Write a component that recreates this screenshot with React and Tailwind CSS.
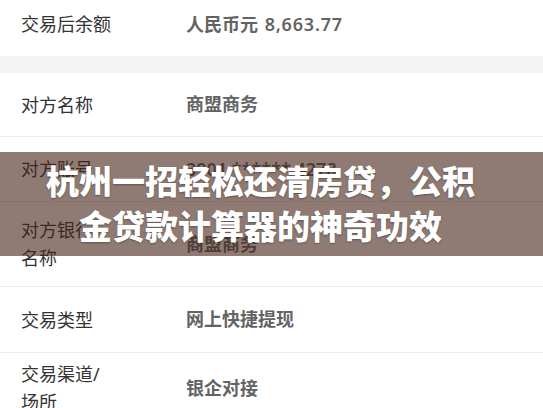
import React from 'react';

const rows = [
  { label: ['对方名称'], value: '商盟商务', h: 'h-[64px]' },
  { label: ['对方账号'], value: '3901 ****** 4278', h: 'h-[65px]' },
  { label: ['对方银行', '名称'], value: '商盟商务', h: 'h-[85px]' },
  { label: ['交易类型'], value: '网上快捷提现', h: 'h-[66px]' },
  { label: ['交易渠道/', '场所'], value: '银企对接', h: 'h-[70px]' },
];

const Row = ({ label, value, h, last }) => (
  <div className={`flex items-center ${h} ${last ? '' : 'border-b border-[#ececec]'}`}>
    <div className="w-[186px] shrink-0 pl-[21px] text-[18px] leading-[28px] text-[#333333]">
      {label.map((l) => (
        <div key={l}>{l}</div>
      ))}
    </div>
    <div className="text-[18px] font-semibold text-[#636363]">{value}</div>
  </div>
);

export default function App() {
  return (
    <div
      className="relative h-[408px] w-[543px] overflow-hidden bg-white"
      style={{ fontFamily: '"Noto Sans", "Noto Sans CJK SC", sans-serif' }}
    >
      <div className="flex h-[56px] items-start pt-[10px]">
        <div className="w-[186px] shrink-0 pl-[21px] text-[18px] leading-[28px] text-[#333333]">交易后余额</div>
        <div className="text-[18px] font-semibold leading-[28px] text-[#636363]">
          人民币元 <span className="ml-[2px] tracking-[0.8px]">8,663.77</span>
        </div>
      </div>
      <div className="h-[17px] bg-[#f4f2f5]" />
      {rows.map((r, i) => (
        <Row key={i} {...r} last={i === rows.length - 1} />
      ))}

      <div className="absolute left-0 right-0 top-[152px] flex h-[104px] flex-col items-center justify-center bg-[rgba(68,35,23,0.6)] pr-[22px]">
        <div className="text-center text-[33px] font-black leading-[45px] text-white [text-shadow:0_1px_2px_rgba(0,0,0,0.35)]">
          杭州一招轻松还清房贷，公积
        </div>
        <div className="text-center text-[33px] font-black leading-[45px] text-white [text-shadow:0_1px_2px_rgba(0,0,0,0.35)]">
          金贷款计算器的神奇功效
        </div>
      </div>
    </div>
  );
}
